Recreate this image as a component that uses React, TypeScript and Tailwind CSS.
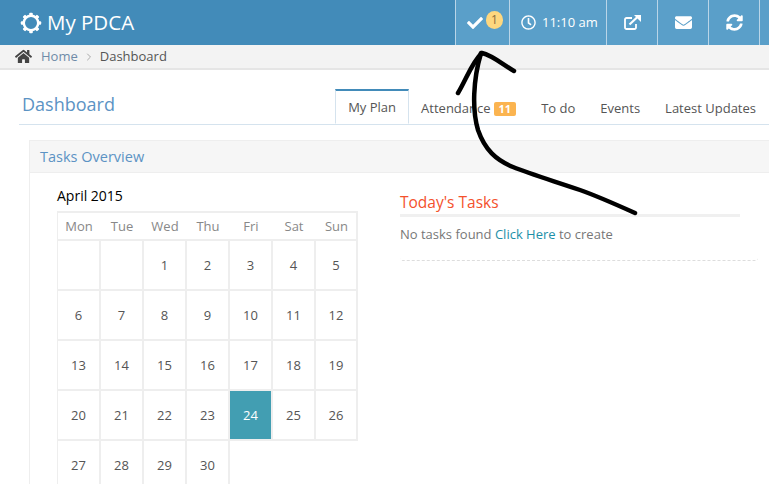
import { FaCheck, FaEnvelope, FaHome, FaRegClock, FaSyncAlt } from 'react-icons/fa'
import { ChevronRight } from 'lucide-react'

const weekDays = ['Mon', 'Tue', 'Wed', 'Thu', 'Fri', 'Sat', 'Sun']
const days = [
  null, null, 1, 2, 3, 4, 5,
  6, 7, 8, 9, 10, 11, 12,
  13, 14, 15, 16, 17, 18, 19,
  20, 21, 22, 23, 24, 25, 26,
  27, 28, 29, 30,
]

function Gear() {
  const teeth = [0, 45, 90, 135, 180, 225, 270, 315]
  return (
    <svg width="22" height="22" viewBox="0 0 22 22" className="shrink-0">
      <circle cx="11" cy="11" r="7.2" fill="none" stroke="#fff" strokeWidth="2.4" />
      {teeth.map(a => (
        <rect key={a} x="9.2" y="0.8" width="3.6" height="3.4" rx="1" fill="#fff" transform={`rotate(${a} 11 11)`} />
      ))}
    </svg>
  )
}

function ExternalLink() {
  return (
    <svg width="17" height="15" viewBox="0 0 17 15" fill="none" stroke="#fff" strokeWidth="1.8">
      <path d="M8 3H2.5A1.5 1.5 0 0 0 1 4.5v8A1.5 1.5 0 0 0 2.5 14h8a1.5 1.5 0 0 0 1.500-1.500V9" />
      <path d="M5.500 9.500 14 1.500" strokeWidth="2.200" />
      <path d="M10 0h7v7z" fill="#fff" stroke="none" />
    </svg>
  )
}

function NavCell({ className, children }: { className: string; children: React.ReactNode }) {
  return (
    <div className={`h-full flex items-center border-l border-[#b9d5e8] bg-[#5a9fc9] ${className}`}>
      {children}
    </div>
  )
}

function Tab({ children, active }: { children: React.ReactNode; active?: boolean }) {
  return (
    <div
      className={
        active
          ? 'h-[35px] w-[74px] -mb-px pt-[2px] pl-[1px] flex items-center justify-center bg-white text-[#555] border border-[#d5e3ee] border-b-white border-t-2 border-t-[#428bb9]'
          : 'h-[35px] px-[12.500px] pt-[4px] flex items-center text-[#555]'
      }
    >
      {children}
    </div>
  )
}

export default function App() {
  return (
    <div className="relative w-[769px] h-[484px] overflow-hidden bg-white font-['Open_Sans',sans-serif] text-[13px]">
      <header className="h-[45px] flex bg-[#428bb9] text-white">
        <div className="flex items-center gap-[5px] pl-[20px] flex-1 text-[20.500px]">
          <Gear />
          <span>My PDCA</span>
        </div>
        <NavCell className="w-[54px] pl-[11px] gap-[3px]">
          <FaCheck size={16} />
          <span className="w-[17px] h-[18px] mb-[6px] rounded-full bg-[#fdd77f] text-[#8a6d3b] text-[12px] flex items-center justify-center">1</span>
        </NavCell>
        <NavCell className="w-[97px] pl-[11px] gap-[6px] font-medium">
          <FaRegClock size={15} />
          <span>11:10 am</span>
        </NavCell>
        <NavCell className="w-[51px] justify-center"><ExternalLink /></NavCell>
        <NavCell className="w-[51px] justify-center"><FaEnvelope size={17} /></NavCell>
        <NavCell className="w-[51px] justify-center"><FaSyncAlt size={17} /></NavCell>
        <NavCell className="w-[10px]">{null}</NavCell>
      </header>

      <nav className="h-[25px] flex items-center pl-[15px] bg-[#f3f3f3] border-b-2 border-[#e5e5e5] text-[#555]">
        <FaHome size={17} className="text-[#444]" />
        <span className="ml-[9px] text-[#6f8ba8]">Home</span>
        <ChevronRight size={12} className="mx-[5px] text-[#aaa]" />
        <span>Dashboard</span>
      </nav>

      <div className="ml-[19px] h-[55px] flex items-end justify-between border-b border-[#d5e3ee]">
        <h1 className="mb-[7px] ml-[3px] text-[18px] leading-[25px] text-[#5c93c4]">Dashboard</h1>
        <div className="flex mr-[0.500px]">
          <Tab active>My Plan</Tab>
          <Tab>
            Attendance
            <span className="ml-[3px] px-[5px] h-[14px] rounded-[2px] bg-[#fbb450] text-white text-[11px] font-bold leading-[14px]">11</span>
          </Tab>
          <Tab>To do</Tab>
          <Tab>Events</Tab>
          <Tab>Latest Updates</Tab>
        </div>
      </div>

      <section className="ml-[29px] mt-[15px] w-[800px] border border-[#eeeeee] min-h-[400px]">
        <div className="h-[32px] pl-[10px] flex items-center bg-[#f6f6f6] border-b border-[#eeeeee] text-[14.500px] text-[#5c93c4]">
          Tasks Overview
        </div>
        <div className="flex pl-[27px] pt-[13px]">
          <div className="w-[301px]">
            <div className="h-[25px] text-[14px] leading-[20px] text-black">April 2015</div>
            <div className="border-l border-[#eeeeee]">
              <div className="grid grid-cols-[repeat(6,43px)_42px] h-[30px] pt-[1px] border-y-2 border-r-2 border-[#eeeeee] items-center text-center text-[#888]">
                {weekDays.map(d => <div key={d} className="pr-[1px]">{d}</div>)}
              </div>
              <div className="grid grid-cols-[repeat(6,43px)_42px] grid-rows-[repeat(5,50px)]">
                {days.map((d, i) => (
                  <div
                    key={i}
                    className={`flex items-center justify-center pt-[1px] border-r-2 border-b-2 border-[#eeeeee] ${d === 24 ? 'bg-[#429eb2] text-white' : 'text-[#555]'}`}
                  >
                    {d}
                  </div>
                ))}
              </div>
            </div>
          </div>
          <div className="ml-[42px] w-[358px] pt-[6px]">
            <h2 className="w-[340px] h-[25px] text-[15.500px] leading-[20px] font-medium text-[#f4512c] border-b-[3px] border-[#f0f0f0]">Today's Tasks</h2>
            <p className="mt-[2px] h-[42px] text-[#777] leading-[30px] border-b border-dashed border-[#dddddd] rounded-b-[3px]">
              No tasks found <span className="font-medium text-[#1d8fa8]">Click Here</span> to create
            </p>
          </div>
        </div>
      </section>

      <svg width="769" height="484" className="absolute left-0 top-0 pointer-events-none" fill="none" stroke="#000" strokeWidth="4.5" strokeLinecap="round" strokeLinejoin="round">
        <path d="M635 213C615 204 597 196 580 190C557 182 530 174 513 167C496 160 485 150 478 130C472 110 473 80 481 53" />
        <path d="M458 93C466 80 472 62 482 53C492 55 505 66 514 71" />
      </svg>
    </div>
  )
}
